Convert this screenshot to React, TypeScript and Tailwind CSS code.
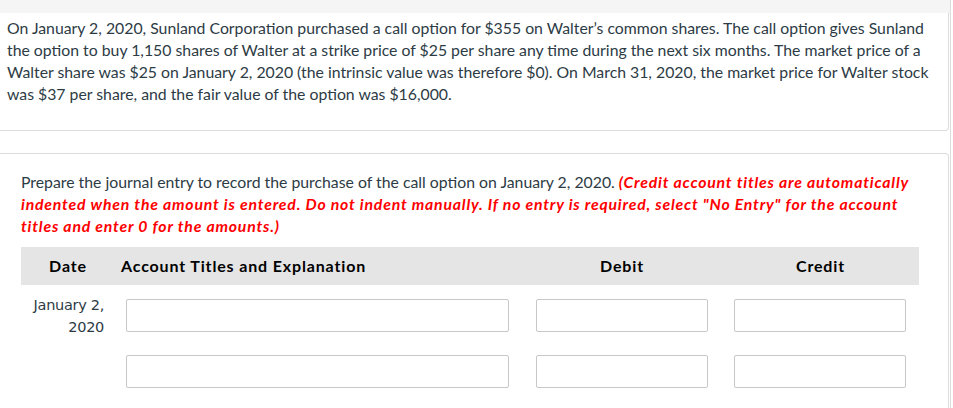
export default function App() {
  const lato = { fontFamily: "Lato, 'Open Sans', sans-serif" };
  const row = (first: boolean) => (
    <div className="grid grid-cols-[94px_407px_200px_197px] items-start">
      <div
        className="-mt-[5px] pr-[11px] text-right text-[14.5px] leading-[22px] text-[#2d3b45]"
        style={{ fontFamily: "'DejaVu Sans', Verdana, sans-serif", letterSpacing: "-0.3px" }}
      >
        {first ? (
          <>
            January 2,
            <br />
            2020
          </>
        ) : null}
      </div>
      <div className="pl-[11px]">
        <input className="block h-[33px] w-[383px] rounded-[2px] border border-[#c8c8c8] bg-white" />
      </div>
      <div className="pl-[14px]">
        <input className="block h-[33px] w-[172px] rounded-[2px] border border-[#c8c8c8] bg-white" />
      </div>
      <div className="pl-[12px]">
        <input className="block h-[33px] w-[172px] rounded-[2px] border border-[#c8c8c8] bg-white" />
      </div>
    </div>
  );
  return (
    <div className="flex h-[408px] w-full overflow-hidden bg-white" style={lato}>
      <div className="flex w-[950px] flex-col">
        <div className="h-[13px] w-full bg-[#f5f5f5] shadow-[0_1px_2px_rgba(0,0,0,0.08)]" />
        <div className="mr-[1px] h-[118px] rounded-br-[4px] border-r border-b border-[#dcdcdc] bg-white pl-[7px] pr-[12px] pt-[4px] text-[15.8px] leading-[22px] text-[#2d3b45]">
          On January 2, 2020, Sunland Corporation purchased a call option for $355 on Walter’s common shares. The call option gives Sunland the option to buy 1,150 shares of Walter at a strike price of $25 per share any time during the next six months. The market price of a Walter share was $25 on January 2, 2020 (the intrinsic value was therefore $0). On March 31, 2020, the market price for Walter stock was $37 per share, and the fair value of the option was $16,000.
        </div>
        <div className="mr-[1px] mt-[22px] flex-1 rounded-tr-[4px] border-t border-r border-[#dcdcdc] bg-white pl-[21px] pr-[29px] pt-[17px]">
          <p className="text-[15.8px] leading-[22px] text-[#2d3b45]">
            Prepare the journal entry to record the purchase of the call option on January 2, 2020.{" "}
            <span className="font-bold italic tracking-[0.8px] text-[#f00]">
              (Credit account titles are automatically indented when the amount is entered. Do not indent manually. If no entry is required, select "No Entry" for the account titles and enter 0 for the amounts.)
            </span>
          </p>
          <div className="mt-[10px] w-[898px]">
            <div className="grid h-[38px] grid-cols-[94px_407px_200px_197px] items-center bg-[#e5e5e5] text-[16px] font-bold tracking-[0.85px] text-black">
              <div className="text-center">Date</div>
              <div className="pl-[6px]">Account Titles and Explanation</div>
              <div className="text-center">Debit</div>
              <div className="text-center">Credit</div>
            </div>
            <div className="mt-[14px] flex flex-col gap-[17px]">
              {row(true)}
              {row(false)}
            </div>
          </div>
        </div>
      </div>
      <div className="flex-1 border-l border-[#dcdcdc] bg-white" />
    </div>
  );
}
